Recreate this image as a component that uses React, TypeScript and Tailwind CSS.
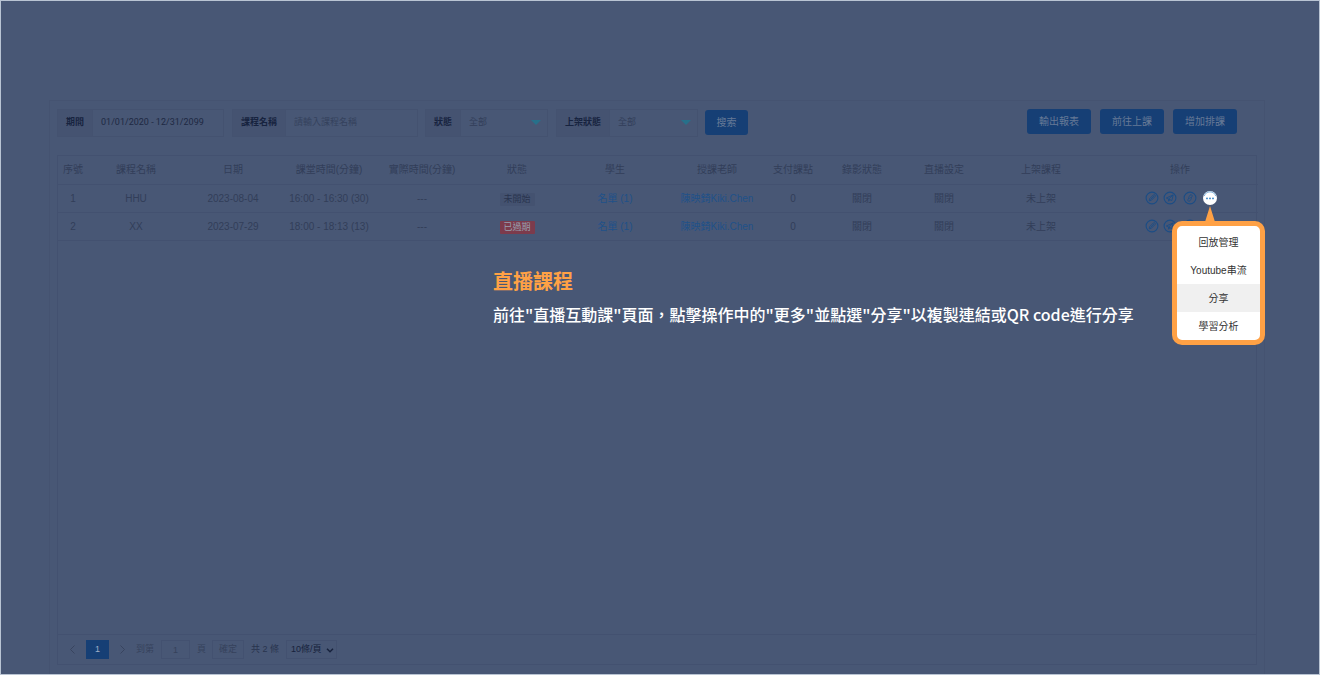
import React from 'react';
import clsx from 'clsx';

const COLUMNS = [
  { label: '序號', width: 'w-[30px]' },
  { label: '課程名稱', width: 'w-[96px]' },
  { label: '日期', width: 'w-[98px]' },
  { label: '課堂時間(分鐘)', width: 'w-[94px]' },
  { label: '實際時間(分鐘)', width: 'w-[92px]' },
  { label: '狀態', width: 'w-[98px]' },
  { label: '學生', width: 'w-[98px]' },
  { label: '授課老師', width: 'w-[106px]' },
  { label: '支付課點', width: 'w-[46px]' },
  { label: '錄影狀態', width: 'w-[92px]' },
  { label: '直播設定', width: 'w-[72px]' },
  { label: '上架課程', width: 'w-[122px]' },
  { label: '操作', width: 'w-[156px]' },
];

const COURSES = [
  { id: 1, name: 'HHU', date: '2023-08-04', time: '16:00 - 16:30 (30)', status: '未開始', expired: false },
  { id: 2, name: 'XX', date: '2023-07-29', time: '18:00 - 18:13 (13)', status: '已過期', expired: true },
];

const MENU_ITEMS = ['回放管理', 'Youtube串流', '分享', '學習分析'];

function PencilIcon() {
  return (
    <svg viewBox="0 0 14 14" className="size-3.5" fill="none" stroke="currentColor" strokeLinejoin="round">
      <circle cx="7" cy="7" r="5.9" strokeWidth="1.1" />
      <path d="M4.2 9.8 4.6 7.7 8.4 3.9Q9.2 3.3 10 4.1T10.1 5.6L6.3 9.4ZM5.4 8.7 9 5.1" strokeWidth="0.9" />
    </svg>
  );
}

function SendIcon() {
  return (
    <svg viewBox="0 0 14 14" className="size-3.5" fill="none" stroke="currentColor" strokeLinejoin="round">
      <circle cx="7" cy="7" r="5.9" strokeWidth="1.1" />
      <path d="M10.2 3.9 3.3 7 5.5 8.1 8.8 9.6ZM10.2 3.9 5.6 8.1V10.2L6.9 8.8" strokeWidth="0.9" />
    </svg>
  );
}

function LinkIcon() {
  return (
    <svg viewBox="0 0 14 14" className="size-3.5" fill="none" stroke="currentColor" strokeLinecap="round">
      <circle cx="7" cy="7" r="5.9" strokeWidth="1.1" />
      <path d="M6.3 7.7C5.5 6.9 5.7 6.3 6.2 5.5L7 4.2C7.8 3.1 9.6 3.9 9.1 5.3L8.5 6.5M7.6 6.3C8.5 7.1 8.3 7.7 7.8 8.5L7 9.8C6.2 10.9 4.4 10.1 4.9 8.7L5.5 7.5" strokeWidth="0.9" />
    </svg>
  );
}

function MoreIcon() {
  return (
    <svg viewBox="0 0 14 14" className="size-3.5">
      <circle cx="7" cy="7" r="7" fill="#ffffff" />
      <path d="M1.3 5A6 6 0 0 1 12.7 5" fill="none" stroke="#5b9bd0" strokeWidth="0.8" />
      <circle cx="4" cy="7.4" r="0.9" fill="#2f7fc4" />
      <circle cx="7" cy="7.4" r="0.9" fill="#2f7fc4" />
      <circle cx="10" cy="7.4" r="0.9" fill="#2f7fc4" />
    </svg>
  );
}

function Field({ id, label, width, children }: { id: string; label: string; width: string; children: React.ReactNode }) {
  return (
    <div className={clsx('flex h-7 border border-[#445270] text-[9px]', width)}>
      <label htmlFor={id} className="flex items-center border-r border-[#445270] bg-[#455371] px-2 font-bold whitespace-nowrap text-[#17233f]">
        {label}
      </label>
      {children}
    </div>
  );
}

function StatusSelect({ id }: { id: string }) {
  return (
    <div className="relative min-w-0 flex-1">
      <select id={id} className="h-full w-full appearance-none bg-transparent px-2 text-[#323e59]">
        <option>全部</option>
      </select>
      <svg viewBox="0 0 10 5" className="pointer-events-none absolute top-2.5 right-1.5 h-[5px] w-2.5">
        <path d="M0 0H10L5 5Z" fill="#27708a" />
      </svg>
    </div>
  );
}

function ActionButton({ children }: { children: React.ReactNode }) {
  return <button className="h-[25px] w-16 rounded-[3px] bg-[#163f75] text-[10px] text-[#667996]">{children}</button>;
}

function MoreMenu() {
  return (
    <div className="absolute top-[30px] -left-[31px] z-10 w-[93px] rounded-[10px] border-5 border-[#ffa145] bg-white text-[10px] text-[#333333]">
      <svg viewBox="0 0 10 16" className="absolute -top-5 left-7 h-4 w-2.5">
        <path d="M5 0 10 16H0Z" fill="#ffa145" />
      </svg>
      <ul className="overflow-hidden rounded-[5px] pt-0.5">
        {MENU_ITEMS.map((item) => (
          <li key={item}>
            <button className={clsx('h-7 w-full text-center', item === '分享' && 'bg-[#f0f0f0]')}>{item}</button>
          </li>
        ))}
      </ul>
    </div>
  );
}

function Actions({ menuOpen }: { menuOpen: boolean }) {
  return (
    <div className="flex items-center pl-[43px] text-[#1b4d86]">
      <button aria-label="編輯" className="mr-1"><PencilIcon /></button>
      <button aria-label="前往" className="mr-1.5"><SendIcon /></button>
      <button aria-label="連結" className="mr-1.5"><LinkIcon /></button>
      {menuOpen && (
        <div className="relative flex">
          <button aria-label="更多"><MoreIcon /></button>
          <MoreMenu />
        </div>
      )}
    </div>
  );
}

function Pagination() {
  return (
    <nav className="flex h-[30px] items-center border-t border-[#435170] pl-2 text-[9px] text-[#36425c]">
      <button aria-label="上一頁" className="flex w-5 justify-start pl-1">
        <svg viewBox="0 0 5 9" className="h-[9px] w-[5px]" fill="none" stroke="#38445f"><path d="M4.5.5.5 4.5l4 4" /></svg>
      </button>
      <button className="h-[19px] w-[23px] bg-[#163f75] text-[#9fb0c6]">1</button>
      <button aria-label="下一頁" className="flex w-[27px] justify-center">
        <svg viewBox="0 0 5 9" className="h-[9px] w-[5px]" fill="none" stroke="#38445f"><path d="m.5.5 4 4-4 4" /></svg>
      </button>
      <label htmlFor="page">到第</label>
      <input id="page" defaultValue="1" className="mx-[7px] h-[19px] w-[29px] border border-[#435170] text-center" />
      <span>頁</span>
      <button className="mr-[7px] ml-1.5 h-[19px] w-8 border border-[#435170]">確定</button>
      <span className="text-[#29344e]">共 2 條</span>
      <div className="relative ml-[7px]">
        <select aria-label="每頁筆數" className="h-[19px] w-[51px] appearance-none border border-[#435170] pl-1 text-[#17223c]">
          <option>10條/頁</option>
        </select>
        <svg viewBox="0 0 8 5" className="pointer-events-none absolute top-2 right-[3px] h-[5px] w-2" fill="none" stroke="#17223c" strokeWidth="1.5">
          <path d="m1 .8 3 3 3-3" />
        </svg>
      </div>
    </nav>
  );
}

export default function App() {
  return (
    <div className="relative flex min-h-screen flex-col border border-[#b9c4d3] bg-[#485775] px-12 pt-[99px] font-['Liberation_Sans','Noto_Sans_CJK_TC',sans-serif]">
      <main className="mr-1.5 flex flex-1 flex-col border-x border-t border-[#455371] px-[7px] pb-[9px]">
        <form className="flex items-start pt-2" onSubmit={(e) => e.preventDefault()}>
          <Field id="period" label="期間" width="w-[167px]">
            <input id="period" defaultValue="01/01/2020 - 12/31/2099" className="min-w-0 flex-1 px-2 font-['Roboto',sans-serif] text-[#1e2943]" />
          </Field>
          <div className="w-2" />
          <Field id="name" label="課程名稱" width="w-[186px]">
            <input id="name" placeholder="請輸入課程名稱" className="min-w-0 flex-1 px-2 placeholder:text-[#35425d]" />
          </Field>
          <div className="w-[7px]" />
          <Field id="status" label="狀態" width="w-[123px]">
            <StatusSelect id="status" />
          </Field>
          <div className="w-2" />
          <Field id="shelf" label="上架狀態" width="w-[142px]">
            <StatusSelect id="shelf" />
          </Field>
          <button className="mt-px ml-[7px] h-[25px] w-[43px] rounded-[3px] bg-[#163f75] text-[10px] text-[#667996]">搜索</button>
          <div className="mr-5 ml-auto flex gap-[9px]">
            <ActionButton>輸出報表</ActionButton>
            <ActionButton>前往上課</ActionButton>
            <ActionButton>增加排課</ActionButton>
          </div>
        </form>

        <section className="mt-[18px] flex flex-1 flex-col border border-[#435170]">
          <table className="w-full table-fixed border-collapse text-center text-[10px] whitespace-nowrap text-[#323e59]">
            <thead>
              <tr className="h-7 border-b border-[#435170]">
                {COLUMNS.map((col) => (
                  <th key={col.label} className={clsx('font-normal', col.width)}>
                    {col.label}
                  </th>
                ))}
              </tr>
            </thead>
            <tbody>
              {COURSES.map((course) => (
                <tr key={course.id} className="h-7 border-b border-[#435170]">
                  <td>{course.id}</td>
                  <td>{course.name}</td>
                  <td>{course.date}</td>
                  <td>{course.time}</td>
                  <td>---</td>
                  <td>
                    <span
                      className={clsx(
                        'inline-block h-[13px] w-[35px] rounded-[1px] text-[9px] leading-[13px]',
                        course.expired ? 'bg-[#7c3b4c] text-[#98a0b0]' : 'bg-[#445270] text-[#29344e]',
                      )}
                    >
                      {course.status}
                    </span>
                  </td>
                  <td><a href="#list" className="text-[#1f5189]">名單 (1)</a></td>
                  <td><a href="#teacher" className="text-[#1f5189]">陳映錡Kiki.Chen</a></td>
                  <td>0</td>
                  <td>關閉</td>
                  <td>關閉</td>
                  <td>未上架</td>
                  <td><Actions menuOpen={course.id === 1} /></td>
                </tr>
              ))}
            </tbody>
          </table>
          <div className="flex-1" />
          <Pagination />
        </section>
      </main>

      {/* Tutorial caption */}
      <div className="absolute top-[265px] left-[492px] font-['Noto_Sans_CJK_TC',sans-serif] whitespace-nowrap">
        <h1 className="text-xl leading-[30px] font-bold text-[#ffa145]">直播課程</h1>
        <p className="mt-1.5 text-base leading-6 font-medium text-white">
          前往"直播互動課"頁面，點擊操作中的"更多"並點選"分享"以複製連結或QR code進行分享
        </p>
      </div>
    </div>
  );
}
